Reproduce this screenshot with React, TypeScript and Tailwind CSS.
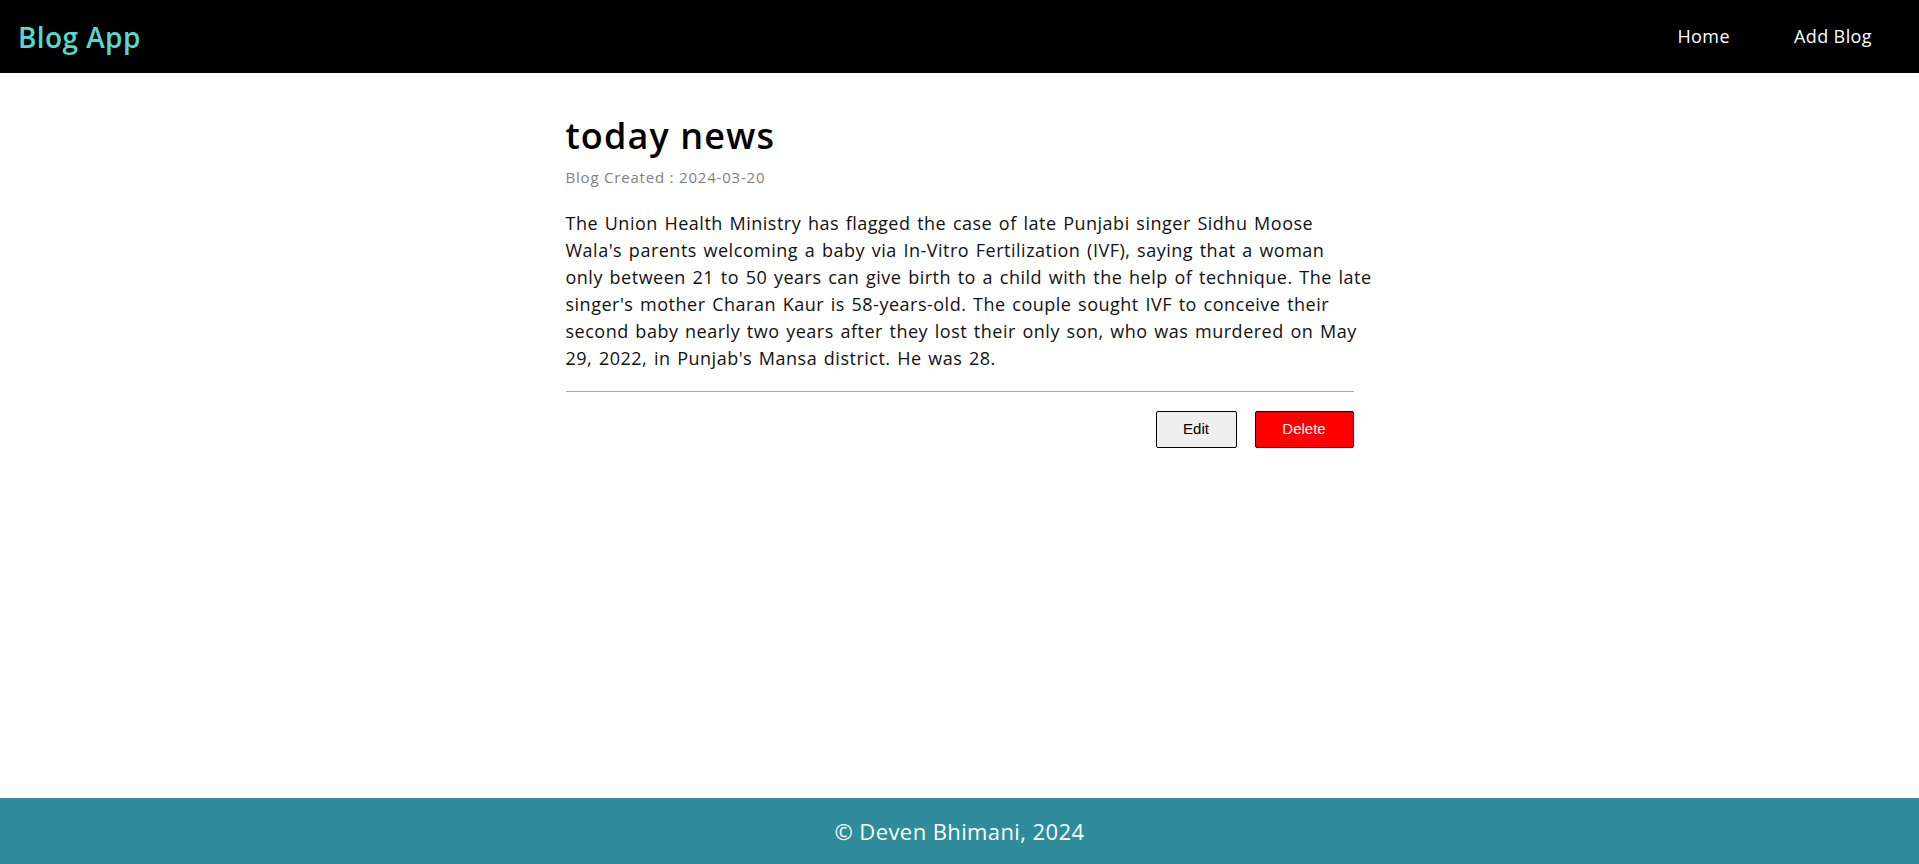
const lines = [
	"The Union Health Ministry has flagged the case of late Punjabi singer Sidhu Moose",
	"Wala's parents welcoming a baby via In-Vitro Fertilization (IVF), saying that a woman",
	"only between 21 to 50 years can give birth to a child with the help of technique. The late",
	"singer's mother Charan Kaur is 58-years-old. The couple sought IVF to conceive their",
	"second baby nearly two years after they lost their only son, who was murdered on May",
	"29, 2022, in Punjab's Mansa district. He was 28.",
];

const App = () => {
	return (
		<div className="flex min-h-[864px] flex-col bg-white font-['Open_Sans',sans-serif]">
			<nav className="flex h-[73px] items-center justify-between bg-black pl-[18px] pr-[47px]">
				<a href="#" className="text-[28px] font-semibold tracking-[0.4px] text-[#56d8cc]">
					Blog App
				</a>
				<div className="flex items-center gap-[64px] text-[18px] tracking-[0.4px] text-white">
					<a href="#">Home</a>
					<a href="#">Add Blog</a>
				</div>
			</nav>

			<main className="flex-1">
				<div className="mx-auto w-[788px] pt-[39px]">
					<h1 className="text-[36px] leading-[48px] font-semibold tracking-[1.1px] text-black">today news</h1>
					<p className="mt-[6px] text-[15px] tracking-[0.8px] text-[#808080]">Blog Created : 2024-03-20</p>
					<p className="mt-[21px] text-[18px] leading-[27px] tracking-[0.5px] [word-spacing:1.5px] text-[#111]">
						{lines.map((l) => (
							<span key={l} className="block whitespace-nowrap">
								{l}
							</span>
						))}
					</p>
					<hr className="mt-[19px] border-t border-[#aaa]" />
					<div className="mt-[19px] flex justify-end gap-[18px] font-['Liberation_Sans',sans-serif] text-[15px]">
						<button className="h-[37px] w-[81px] rounded-[2px] border border-black bg-[#efefef] text-black">
							Edit
						</button>
						<button className="h-[37px] w-[99px] rounded-[2px] border border-black bg-[#ff0000] text-white">
							Delete
						</button>
					</div>
				</div>
			</main>

			<footer className="flex h-[66px] items-center justify-center bg-[#2e8c9b] text-[22px] tracking-[0.4px] text-white">
				© Deven Bhimani, 2024
			</footer>
		</div>
	);
};

export default App;
